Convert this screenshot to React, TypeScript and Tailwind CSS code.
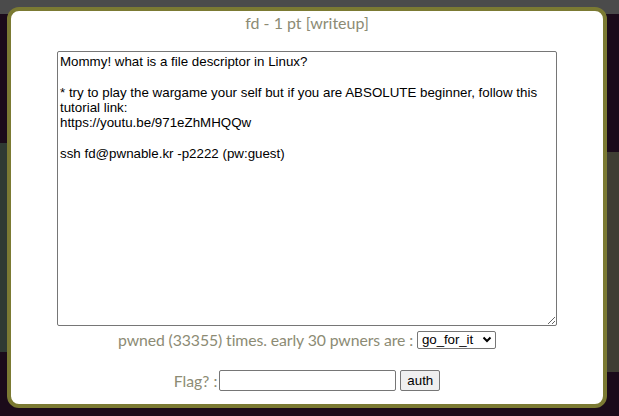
export default function App() {
  const desc = `Mommy! what is a file descriptor in Linux?

* try to play the wargame your self but if you are ABSOLUTE beginner, follow this tutorial link:
https://youtu.be/971eZhMHQQw

ssh fd@pwnable.kr -p2222 (pw:guest)`;

  return (
    <div className="relative w-[619px] h-[416px] overflow-hidden bg-[#1b0b1a] font-['Lato',sans-serif]">
      {/* page behind the popup */}
      <div className="h-[14px] bg-[#4b4b4b]" />
      <div className="flex justify-between pt-[129px]">
        <div className="w-[7px] h-[209px] bg-[#2f3a33]" />
        <div className="w-[12px] h-[220px] mt-[9px] bg-[#3f3e33]" />
      </div>

      {/* popup */}
      <div className="absolute left-[7px] top-[7px] w-[600px] h-[401px] border-4 border-[#7b7a33] rounded-[12px] bg-white flex flex-col items-center">
        <h2 className="mt-[2px] text-[16px] leading-[20px] text-[#8c8b74]">fd - 1 pt [writeup]</h2>
        <textarea
          readOnly
          value={desc}
          className="mt-[18px] w-[500px] h-[275px] border border-[#767676] rounded-[2px] p-[2px] text-[13.33px] leading-[15.3px] text-black font-['Liberation_Sans',Arial,sans-serif] resize-y outline-none"
        />
        <div className="mt-[4px] flex items-center gap-[4px] text-[15.8px] tracking-[-0.1px] leading-[20px] text-[#8c8b74]">
          <span>pwned (33355) times. early 30 pwners are :</span>
          <div className="relative">
            <select className="appearance-none w-[79px] h-[18px] border border-[#767676] rounded-[2px] bg-white text-black text-[13.33px] leading-[16px] font-['Liberation_Sans',Arial,sans-serif] pl-[4px] pr-[18px] block">
              <option>go_for_it</option>
            </select>
            <svg className="absolute right-[4px] top-[5px] pointer-events-none" width="10" height="7" viewBox="0 0 10 7">
              <path d="M1.5 1.5 L5 5 L8.5 1.5" fill="none" stroke="#000" strokeWidth="2" />
            </svg>
          </div>
        </div>
        <div className="mt-[20px] flex items-center gap-[2px] text-[15.8px] leading-[20px] text-[#8c8b74]">
          <span>Flag? :</span>
          <input
            type="text"
            className="w-[177px] h-[21px] border border-[#767676] rounded-[2px] bg-white px-[2px] text-[13.33px] font-['Liberation_Sans',Arial,sans-serif]"
          />
          <button className="ml-[2px] h-[21px] px-[6px] border border-[#767676] rounded-[2px] bg-[#efefef] text-black text-[13.33px] font-['Liberation_Sans',Arial,sans-serif]">
            auth
          </button>
        </div>
      </div>
    </div>
  );
}
